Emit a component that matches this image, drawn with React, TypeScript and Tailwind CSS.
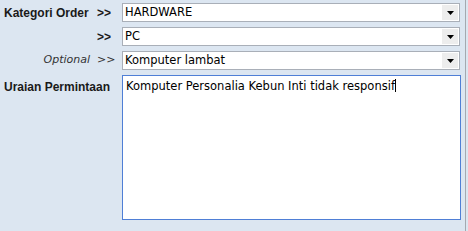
import React from "react";

const fieldFont = { fontFamily: '"DejaVu Sans", Verdana, sans-serif' };

function Arrow() {
  return (
    <div className="absolute right-[1px] top-[1px] bottom-[1px] w-[16px] bg-[#ededed] flex items-center justify-center">
      <svg width="7" height="4" viewBox="0 0 7 4"><path d="M0 0h7L3.5 4z" fill="#000" /></svg>
    </div>
  );
}

function Select({ value }: { value: string }) {
  return (
    <div className="relative w-[338px] h-[19px] bg-white border border-[#a9afb8] flex items-center pl-[2px] text-[11.5px] text-black leading-none" style={fieldFont}>
      <span>{value}</span>
      <Arrow />
    </div>
  );
}

export default function App() {
  const font = { fontFamily: '"Liberation Sans", Arial, sans-serif' };
  return (
    <div className="w-[468px] h-[231px] bg-[#dce6f1] relative" style={font}>
      <div className="absolute right-[2px] top-0 bottom-0 w-[1px] bg-[#a4a9b0]" />
      <div className="pt-[3px] pl-[4px] flex flex-col gap-[5px]">
        <div className="flex items-center h-[19px]">
          <div className="w-[93px] text-[12px] font-bold text-[#1a1a1a] whitespace-nowrap">Kategori Order</div>
          <div className="w-[25px] text-[12px] font-bold text-[#1a1a1a]">&gt;&gt;</div>
          <Select value="HARDWARE" />
        </div>
        <div className="flex items-center h-[19px]">
          <div className="w-[93px]"></div>
          <div className="w-[25px] text-[12px] font-bold text-[#1a1a1a]">&gt;&gt;</div>
          <Select value="PC" />
        </div>
        <div className="flex items-center h-[19px]">
          <div className="w-[86px] text-[11px] italic text-right text-[#333]" style={fieldFont}>Optional</div>
          <div className="w-[7px]"></div>
          <div className="w-[25px] text-[11px] text-[#333]" style={fieldFont}>&gt;&gt;</div>
          <Select value="Komputer lambat" />
        </div>
        <div className="flex items-start">
          <div className="w-[118px] text-[12px] font-bold text-[#1a1a1a] pt-[3px] whitespace-nowrap">Uraian Permintaan</div>
          <div className="w-[339px] h-[145px] bg-white border border-[#4f7fd6] pl-[3px] pt-[3px] text-[11.5px] text-black leading-[14px]" style={fieldFont}>
            Komputer Personalia Kebun Inti tidak responsif<span className="inline-block w-[1px] h-[13px] bg-black align-[-2px]"></span>
          </div>
        </div>
      </div>
    </div>
  );
}
